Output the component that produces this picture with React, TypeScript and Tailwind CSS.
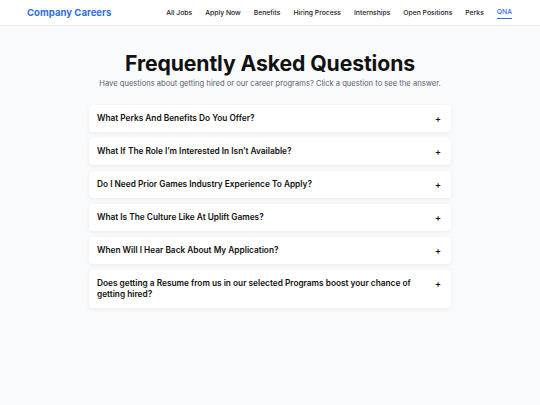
import React from "react";

const links = ["All Jobs", "Apply Now", "Benefits", "Hiring Process", "Internships", "Open Positions", "Perks", "QNA"];

const questions = [
  "What Perks And Benefits Do You Offer?",
  "What If The Role I’m Interested In Isn’t Available?",
  "Do I Need Prior Games Industry Experience To Apply?",
  "What Is The Culture Like At Uplift Games?",
  "When Will I Hear Back About My Application?",
  "Does getting a Resume from us in our selected Programs boost your chance of getting hired?",
];

export default function App() {
  return (
    <div className="min-h-[405px] bg-[#f9fafb] font-['Inter',sans-serif] text-[#111]">
      {/* Nav */}
      <nav className="flex h-[26px] items-center justify-between border-b border-[#eceef1] bg-white pl-[27px] pr-[28px] pt-[1px]">
        <span className="text-[9.6px] font-bold text-[#2f6fdc]">Company Careers</span>
        <div className="flex items-center gap-[13px]">
          {links.map((l) => (
            <span
              key={l}
              className={
                l === "QNA"
                  ? "border-b border-[#2f6fdc] pb-[1px] text-[6.8px] font-medium text-[#2f6fdc]"
                  : "text-[6.8px] font-medium text-[#222]"
              }
            >
              {l}
            </span>
          ))}
        </div>
      </nav>

      {/* Header */}
      <div className="flex flex-col items-center pt-[24px]">
        <h1 className="text-[21.2px] font-bold leading-[26px] tracking-[-0.1px]">Frequently Asked Questions</h1>
        <p className="mt-[2px] text-[7.6px] text-[#5b6270]">
          Have questions about getting hired or our career programs? Click a question to see the answer.
        </p>
      </div>

      {/* FAQ */}
      <div className="mx-auto mt-[16px] flex w-[362px] flex-col gap-[6px]">
        {questions.map((q) => (
          <div
            key={q}
            className="flex items-start justify-between rounded-[4px] bg-white py-[8px] pl-[8px] pr-[10px] shadow-[0_1px_4px_rgba(0,0,0,0.07)]"
          >
            <span className="max-w-[325px] text-[8.3px] font-semibold leading-[11px]">{q}</span>
            <span className="text-[9px] font-semibold leading-[11px]">+</span>
          </div>
        ))}
      </div>
    </div>
  );
}
